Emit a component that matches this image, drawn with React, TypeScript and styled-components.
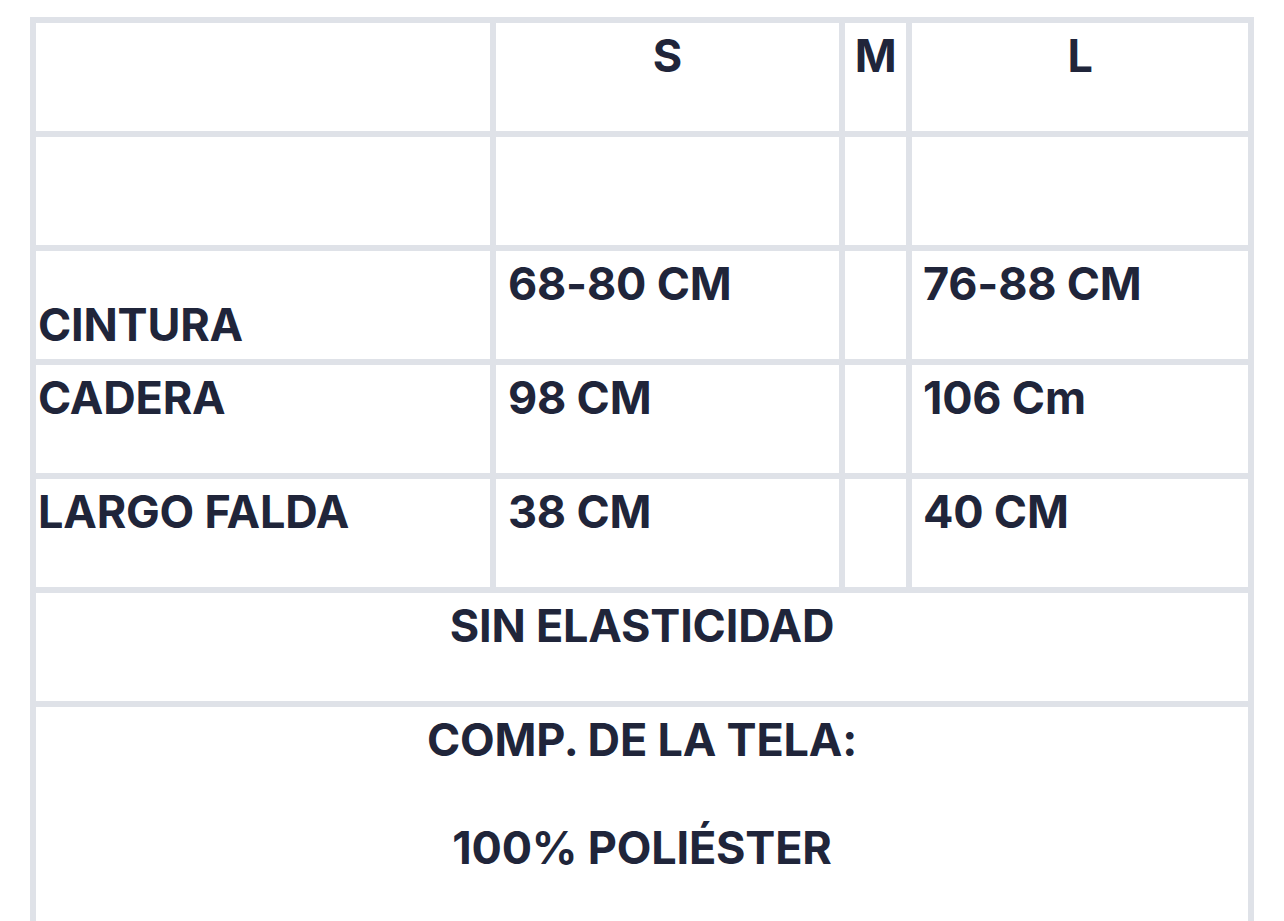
import styled, { createGlobalStyle } from 'styled-components';

const colors = {
  line: '#dfe2e8',
  ink: '#20253a',
  white: '#ffffff',
};

const GlobalStyle = createGlobalStyle`
  html, body {
    margin: 0;
    padding: 0;
    background: ${colors.white};
  }
  body {
    font-family: Inter, "Noto Sans", "Liberation Sans", sans-serif;
    color: ${colors.ink};
  }
`;

type Row = { label: string; s: string; m: string; l: string; labelLow?: boolean };

const rows: Row[] = [
  { label: '', s: '', m: '', l: '' },
  { label: 'CINTURA', s: '68-80 CM', m: '', l: '76-88 CM', labelLow: true },
  { label: 'CADERA', s: '98 CM', m: '', l: '106 Cm' },
  { label: 'LARGO FALDA', s: '38 CM', m: '', l: '40 CM' },
];

const App = () => {
  return (
    <>
      <GlobalStyle />
      <Page>
        <SizeTable>
          <colgroup>
            <col style={{ width: 454 }} />
            <col style={{ width: 343 }} />
            <col style={{ width: 61 }} />
            <col style={{ width: 336 }} />
          </colgroup>
          <tbody>
            <tr>
              <Cell></Cell>
              <Cell $align="center">S</Cell>
              <Cell $align="center">M</Cell>
              <Cell $align="center">L</Cell>
            </tr>
            {rows.map((row, i) => (
              <tr key={i}>
                <Cell $pad={2}>
                  {row.labelLow && <br />}
                  {row.label}
                </Cell>
                <Cell $pad={12}>{row.s}</Cell>
                <Cell $pad={12}>{row.m}</Cell>
                <Cell $pad={11}>{row.l}</Cell>
              </tr>
            ))}
            <tr>
              <Cell colSpan={4} $align="center">
                SIN ELASTICIDAD
              </Cell>
            </tr>
            <tr>
              <Cell colSpan={4} $align="center" $tall>
                <Para>COMP. DE LA TELA:</Para>
                <Para>100% POLIÉSTER</Para>
              </Cell>
            </tr>
          </tbody>
        </SizeTable>
      </Page>
    </>
  );
};

const Page = styled.div`
  padding: 17px 30px 0 30px;
`;

const SizeTable = styled.table`
  width: 1224px;
  table-layout: fixed;
  border-collapse: separate;
  border-spacing: 6px;
  background-color: ${colors.line};
  margin: 0;
`;

const Cell = styled.td<{ $align?: 'left' | 'center'; $pad?: number; $tall?: boolean }>`
  background-color: ${colors.white};
  height: ${({ $tall }) => ($tall ? '260px' : '108px')};
  padding: 12px 0 0 ${({ $pad }) => $pad ?? 0}px;
  box-sizing: border-box;
  vertical-align: top;
  text-align: ${({ $align }) => $align ?? 'left'};
  font-size: 45px;
  font-weight: 700;
  line-height: 41px;
  letter-spacing: -0.2px;
  color: ${colors.ink};
  white-space: nowrap;
  overflow: hidden;
`;

const Para = styled.p`
  margin: 0 0 67px 0;
`;

export default App;
